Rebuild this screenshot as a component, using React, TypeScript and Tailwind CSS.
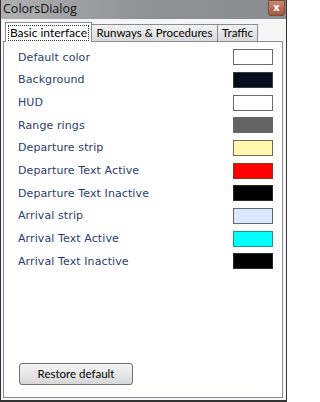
import React from "react";

const rows: { label: string; bg: string; border: string }[] = [
  { label: "Default color", bg: "bg-[#ffffff]", border: "border-[#6b6b6b]" },
  { label: "Background", bg: "bg-[#060d1a]", border: "border-[#3a3a3a]" },
  { label: "HUD", bg: "bg-[#ffffff]", border: "border-[#6b6b6b]" },
  { label: "Range rings", bg: "bg-[#646464]", border: "border-[#646464]" },
  { label: "Departure strip", bg: "bg-[#fffaae]", border: "border-[#6b6b5a]" },
  { label: "Departure Text Active", bg: "bg-[#ff0000]", border: "border-[#8a3a1a]" },
  { label: "Departure Text Inactive", bg: "bg-[#000000]", border: "border-[#2a2a2a]" },
  { label: "Arrival strip", bg: "bg-[#dce8ff]", border: "border-[#5c6a78]" },
  { label: "Arrival Text Active", bg: "bg-[#00ffff]", border: "border-[#1a9a80]" },
  { label: "Arrival Text Inactive", bg: "bg-[#000000]", border: "border-[#2a2a2a]" },
];

export default function App() {
  return (
    <div className="w-[287px] h-[402px] flex flex-col bg-[#f6f6f6] border-x border-b-2 border-[#333333] overflow-hidden">
      {/* Title bar */}
      <div className="h-[19px] flex items-center justify-between bg-gradient-to-r from-[#b0b0b0] via-[#909296] to-[#8a8c90] shrink-0">
        <span className="pl-[2px] text-[12.5px] leading-none text-[#111111] [font-family:'Open_Sans','Noto_Sans',sans-serif]">
          ColorsDialog
        </span>
        <div className="w-[17px] h-[16px] mb-[3px] mr-[1px] rounded-b-[3px] bg-gradient-to-b from-[#c98a72] to-[#a4583e] border border-[#7a4a3a] flex items-center justify-center text-white text-[10px] font-bold leading-none [font-family:'DejaVu_Sans',sans-serif]">
          x
        </div>
      </div>
      {/* Body */}
      <div className="flex-1 flex flex-col pl-[2px] pr-[3px] pt-[3px] pb-[2px] [font-family:'Lato',sans-serif]">
        {/* Tabs */}
        <div className="h-[19px] flex items-end shrink-0 relative z-10">
          <div className="ml-[2px] w-[87px] h-[20px] mb-[-1px] bg-white border border-b-0 border-[#898c95] flex items-center justify-center px-[2px] pt-[1px]">
            <div className="w-full h-[16px] border border-dotted border-[#333333] flex items-center justify-center text-[12px] text-black leading-none">
              Basic interface
            </div>
          </div>
          <div className="w-[126px] h-[17px] bg-gradient-to-b from-[#f2f2f2] to-[#d9d9d9] border border-b-0 border-l-0 border-[#898c95] flex items-center justify-center text-[11.5px] text-black leading-none">
            Runways &amp; Procedures
          </div>
          <div className="w-[40px] h-[17px] bg-gradient-to-b from-[#f2f2f2] to-[#d9d9d9] border border-b-0 border-l-0 border-[#898c95] flex items-center justify-center text-[11.5px] text-black leading-none">
            Traffic
          </div>
        </div>
        {/* Panel */}
        <div className="flex-1 bg-white border border-[#898c95] flex flex-col pt-[4px]">
          {rows.map((r) => (
            <div key={r.label} className="h-[22.67px] flex items-center justify-between pl-[14px] pr-[9px]">
              <span className="text-[11px] tracking-[0.1px] text-[#2a3d6e] leading-none [font-family:'DejaVu_Sans',sans-serif]">{r.label}</span>
              <div className={`w-[40px] h-[16px] border ${r.bg} ${r.border}`} />
            </div>
          ))}
          <div className="mt-auto mb-[12px] ml-[15px]">
            <button className="w-[114px] h-[22px] rounded-[3px] border border-[#707070] bg-gradient-to-b from-[#f3f3f3] via-[#e8e8e8] to-[#d6d6d6] text-[11.5px] text-black leading-none flex items-center justify-center">
              Restore default
            </button>
          </div>
        </div>
      </div>
    </div>
  );
}
